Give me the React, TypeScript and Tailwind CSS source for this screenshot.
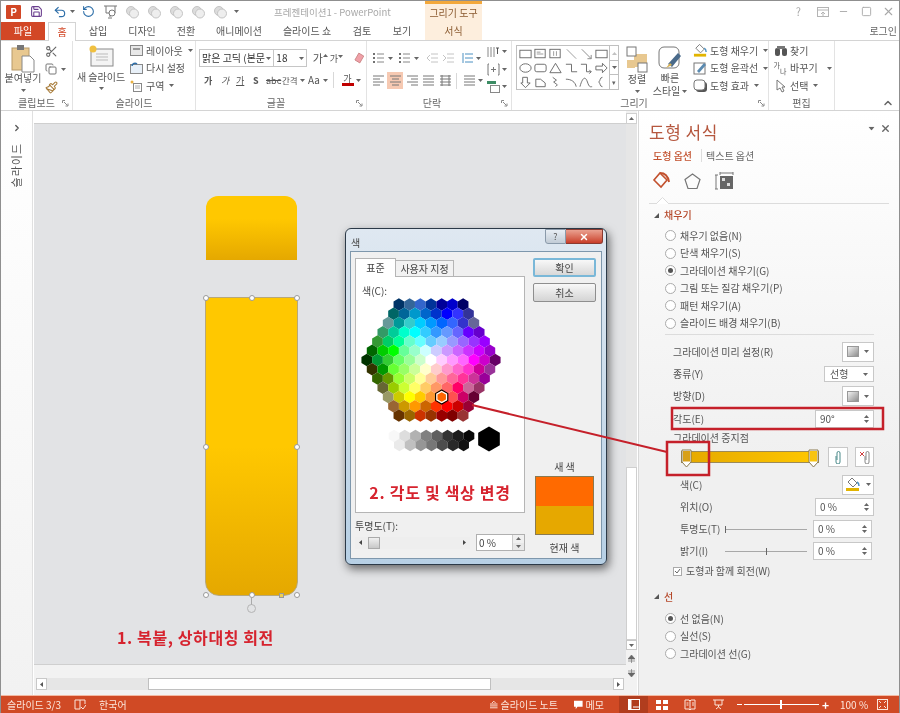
import React from "react";
import { Save, Undo2, RotateCcw, Scissors, Copy, Paintbrush, ChevronUp, X, Minus, Square, ChevronRight } from "lucide-react";

const Caret = ({ className = "" }: { className?: string }) => (
  <svg width="5" height="3" viewBox="0 0 5 3" className={`shrink-0 ${className}`}><path d="M0 0h5L2.5 3z" fill="#666" /></svg>
);

const Launcher = () => (
  <svg width="7" height="7" viewBox="0 0 7 7" className="shrink-0"><path d="M0.5 3V0.5H3M2 2l3.5 3.5M6 3.5V6H3.5" fill="none" stroke="#8a8a8a" strokeWidth="1" /></svg>
);

const Faded = () => (
  <svg width="15" height="14" viewBox="0 0 15 14"><circle cx="6" cy="6" r="4.5" fill="#dcdcdc" stroke="#c4c4c4" /><circle cx="9" cy="8.5" r="4.5" fill="#eeeeee" stroke="#c4c4c4" /></svg>
);

const WHEEL: string[][] = [
  ["003366", "336699", "3366CC", "003399", "000099", "0000CC", "000066"],
  ["006666", "006699", "0099CC", "0066CC", "0033CC", "0000FF", "3333FF", "333399"],
  ["669999", "009999", "33CCCC", "00CCFF", "0099FF", "0066FF", "3366FF", "3333CC", "666699"],
  ["339966", "00CC99", "00FFCC", "00FFFF", "33CCFF", "3399FF", "6699FF", "6666FF", "6600FF", "6600CC"],
  ["339933", "00CC66", "00FF99", "66FFCC", "66FFFF", "66CCFF", "99CCFF", "9999FF", "9966FF", "9933FF", "9900FF"],
  ["006600", "00CC00", "00FF00", "66FF99", "99FFCC", "CCFFFF", "CCCCFF", "CC99FF", "CC66FF", "CC33FF", "CC00FF", "9900CC"],
  ["003300", "009933", "33CC33", "66FF66", "99FF99", "CCFFCC", "FFFFFF", "FFCCFF", "FF99FF", "FF66FF", "FF00FF", "CC00CC", "660066"],
  ["333300", "009900", "66FF33", "99FF66", "CCFF99", "FFFFCC", "FFCCCC", "FF99CC", "FF66CC", "FF33CC", "CC0099", "993399"],
  ["336600", "669900", "99FF33", "CCFF66", "FFFF99", "FFCC99", "FF9999", "FF6699", "FF3399", "CC3399", "990099"],
  ["666633", "99CC00", "CCFF33", "FFFF66", "FFCC66", "FF9966", "FF6666", "FF0066", "CC6699", "993366"],
  ["999966", "CCCC00", "FFFF00", "FFCC00", "FF9933", "FF6600", "FF5050", "CC0066", "660033"],
  ["996633", "CC9900", "FF9900", "CC6600", "FF3300", "FF0000", "CC0000", "990033"],
  ["663300", "996600", "CC3300", "993300", "990000", "800000", "993333"],
];
const GRAY1 = ["F8F8F8", "DDDDDD", "B2B2B2", "808080", "5F5F5F", "333333", "1C1C1C", "080808"];
const GRAY2 = ["EAEAEA", "C0C0C0", "969696", "777777", "4D4D4D", "292929", "111111"];

const hexPts = (cx: number, cy: number, r: number) => {
  const w = (r * Math.sqrt(3)) / 2;
  return [[cx, cy - r], [cx + w, cy - r / 2], [cx + w, cy + r / 2], [cx, cy + r], [cx - w, cy + r / 2], [cx - w, cy - r / 2]]
    .map((p) => p.map((v) => v.toFixed(2)).join(",")).join(" ");
};

const ColorWheel = () => {
  const ox = 356, oy = 296, step = 10.7, R = 6.2, rowH = 9.25;
  const hexes: React.ReactNode[] = [];
  WHEEL.forEach((row, i) => {
    const y = 359 + (i - 6) * rowH - oy;
    row.forEach((c, j) => {
      const x = 431 + (j - (row.length - 1) / 2) * step - ox;
      hexes.push(<polygon key={`${i}-${j}`} points={hexPts(x, y, R)} fill={`#${c}`} />);
    });
  });
  GRAY1.forEach((c, j) => hexes.push(<polygon key={`a${j}`} points={hexPts(431.5 + (j - 3.5) * step - ox, 435 - oy, R)} fill={`#${c}`} />));
  GRAY2.forEach((c, j) => hexes.push(<polygon key={`b${j}`} points={hexPts(431.5 + (j - 3) * step - ox, 444 - oy, R)} fill={`#${c}`} />));
  return (
    <svg width="165" height="165" viewBox="0 0 165 165" className="block">
      {hexes}
      <polygon points={hexPts(489 - ox, 438 - oy, 12.5)} fill="#000" />
      <polygon points={hexPts(441.7 - ox, 396 - oy, 7)} fill="#FF6600" stroke="#000" strokeWidth="1.2" />
      <polygon points={hexPts(441.7 - ox, 396 - oy, 5.6)} fill="none" stroke="#fff" strokeWidth="1.2" />
    </svg>
  );
};

const Shape = ({ i }: { i: number }) => {
  const s = { fill: "none", stroke: "#6a6a6a", strokeWidth: 1 };
  const all: React.ReactNode[] = [
    <rect x="2" y="3" width="12" height="8" {...s} />,
    <g><rect x="2" y="2" width="11" height="9" {...s} /><path d="M4 5h4M4 7h7" stroke="#999" /></g>,
    <g><rect x="2" y="2" width="11" height="9" {...s} /><path d="M6 4v5M9 4v5" stroke="#999" /></g>,
    <path d="M3 2l10 10" {...s} stroke="#999" />,
    <path d="M3 2l10 10M13 8v4h-4" {...s} stroke="#888" />,
    <rect x="2" y="3" width="12" height="8" {...s} />,
    <ellipse cx="8" cy="7" rx="6" ry="4.5" {...s} />,
    <rect x="2" y="3" width="12" height="8" rx="2" {...s} />,
    <path d="M8 2l6 10H2z" {...s} />,
    <path d="M2 3h6v8h6" {...s} />,
    <path d="M2 3h6v8h5M11 9l2 2-2 2" {...s} />,
    <path d="M2 5h7V2l5 5-5 5V9H2z" {...s} />,
    <path d="M5 2h5v6h3l-5 5-5-5h2z" {...s} />,
    <path d="M3 4h5l5 4v4H3z" {...s} />,
    <path d="M5 2l4 3-3 2 4 3-2 2" {...s} />,
    <path d="M2 4c6 0 10 3 11 8" {...s} />,
    <path d="M1 12C4 1 7 1 9 7s3 5 5 5" {...s} />,
    <path d="M9 2C6 2 7 6 5 7c2 1 1 5 4 5" {...s} />,
  ];
  return <svg width="17" height="14" viewBox="0 0 16 14">{all[i]}</svg>;
};

const Radio = ({ on = false }: { on?: boolean }) => (
  <span className="w-[11px] h-[11px] rounded-full border border-[#ababab] bg-white flex items-center justify-center shrink-0">
    {on && <span className="w-[5px] h-[5px] rounded-full bg-[#555]" />}
  </span>
);

const RadioRow = ({ label, on }: { label: string; on?: boolean }) => (
  <div className="h-[17.5px] flex items-center gap-[4px] pl-[26px] text-[10px] text-[#555] leading-none">
    <Radio on={on} />
    <span>{label}</span>
  </div>
);

const Spin = () => (
  <span className="flex flex-col gap-[2px]">
    <svg width="5" height="3" viewBox="0 0 5 3"><path d="M0 3h5L2.5 0z" fill="#666" /></svg>
    <svg width="5" height="3" viewBox="0 0 5 3"><path d="M0 0h5L2.5 3z" fill="#666" /></svg>
  </span>
);

const SpinInput = ({ value }: { value: string }) => (
  <div className="w-[59px] h-[18px] border border-[#c8c8c8] bg-white flex items-center justify-between pl-[4px] pr-[4px] text-[10px] text-[#555] leading-none">
    <span>{value}</span>
    <Spin />
  </div>
);

const Swatch = () => (
  <span className="w-[12px] h-[11px] border border-[#999] bg-gradient-to-br from-[#f2f2f2] to-[#8f8f8f]" />
);

const DropBtn = ({ children }: { children: React.ReactNode }) => (
  <div className="w-[32px] h-[20px] border border-[#c8c8c8] bg-white flex items-center justify-center gap-[5px]">
    {children}
    <Caret />
  </div>
);

const PaneRow = ({ label, h, indent, children }: { label: string; h: string; indent?: boolean; children: React.ReactNode }) => (
  <div className={`flex items-center justify-between text-[10px] text-[#555] leading-none ${h} ${indent ? "pl-[7px]" : ""}`}>
    <span>{label}</span>
    {children}
  </div>
);

const PaneSlider = ({ pos }: { pos: string }) => (
  <div className="w-[82px] h-[1px] bg-[#a8a8a8] relative">
    <span className={`absolute top-[-3px] w-[1px] h-[7px] bg-[#666] ${pos}`} />
  </div>
);

const BucketIcon = ({ bar = "#e2b400" }: { bar?: string }) => (
  <svg width="16" height="15" viewBox="0 0 16 15">
    <path d="M7 1l5 5-4 4-5-5z" fill="#fff" stroke="#777" />
    <path d="M12 5c2 1 2 3 2 4" stroke="#4a90c2" strokeWidth="1.5" fill="none" />
    <rect x="1" y="11" width="13" height="3" fill={bar} />
  </svg>
);

const SmallRow = ({ icon, text, caret = true, caretCls = "ml-[3px]" }: { icon: React.ReactNode; text: string; caret?: boolean; caretCls?: string }) => (
  <div className="h-[17.5px] flex items-center gap-[2px] text-[10px] text-[#555] leading-none whitespace-nowrap">
    <span className="w-[15px] h-[15px] flex items-center justify-center shrink-0">{icon}</span>
    <span>{text}</span>
    {caret && <Caret className={caretCls} />}
  </div>
);

const GroupLabel = ({ text, launcher = true, pad = "" }: { text: string; launcher?: boolean; pad?: string }) => (
  <div className={`h-[14px] flex items-center justify-center relative text-[10px] text-[#666] leading-none ${pad}`}>
    <span>{text}</span>
    {launcher && <span className="absolute right-[3px] top-[4px]"><Launcher /></span>}
  </div>
);

const Lines = ({ kind }: { kind: "l" | "c" | "r" | "j" | "d" }) => {
  const d = {
    l: "M0 2h11M0 5h7M0 8h11M0 11h7",
    c: "M0 2h11M2 5h7M0 8h11M2 11h7",
    r: "M0 2h11M4 5h7M0 8h11M4 11h7",
    j: "M0 2h11M0 5h11M0 8h11M0 11h11",
    d: "M0 2h11M0 5h11M0 8h11M0 11h11M2 1v11M9 1v11",
  }[kind];
  return <svg width="11" height="13" viewBox="0 0 11 13" className="shrink-0"><path d={d} stroke="#777" fill="none" /></svg>;
};

const Bullets = () => (
  <svg width="11" height="13" viewBox="0 0 11 13" className="shrink-0"><path d="M0 2h2M0 6h2M0 10h2" stroke="#444" strokeWidth="1.5" /><path d="M4 2h7M4 6h7M4 10h7" stroke="#888" /></svg>
);

const FontBtn = ({ children, className = "" }: { children: React.ReactNode; className?: string }) => (
  <span className={`text-[9px] text-[#555] leading-none shrink-0 ${className}`}>{children}</span>
);

const Handle = ({ className }: { className: string }) => (
  <span className={`absolute w-[6px] h-[6px] rounded-full bg-white border border-[#9a9a9a] ${className}`} />
);

const Stop = ({ className, fill }: { className: string; fill: string }) => (
  <svg width="11" height="19" viewBox="0 0 11 19" className={className}>
    <path d="M1 1h9v12l-4.5 5L1 13z" fill="#fff" stroke="#8a7a50" />
    <path d="M2 2h7v10.5H2z" fill={fill} />
  </svg>
);

export default function App() {
  return (
    <div className="relative w-[900px] h-[713px] overflow-hidden bg-white border-x border-t border-[#8f8f8f] flex flex-col blur-[0.3px] [font-family:'Noto_Sans_CJK_KR','Noto_Sans',sans-serif]">
      {/* Title + tabs */}
      <div className="flex h-[40px] shrink-0 border-b border-[#d4d4d4]">
        <div className="w-[424px] flex flex-col">
          <div className="h-[21px] flex items-center relative">
            <span className="ml-[5px] w-[15px] h-[14px] bg-[#d24726] text-white text-[10px] font-bold flex items-center justify-center leading-none rounded-[1px]">P</span>
            <Save size={13} className="ml-[9px] text-[#6b3f8f]" />
            <Undo2 size={14} className="ml-[10px] text-[#2d6ea8]" />
            <Caret className="ml-[3px]" />
            <RotateCcw size={13} className="ml-[7px] text-[#2d6ea8]" />
            <svg width="15" height="14" viewBox="0 0 15 14" className="ml-[8px]"><path d="M1 1h13M3 1v7h9V1M7 8v4M5 13h4" fill="none" stroke="#777" /><circle cx="9" cy="8" r="3" fill="#fff" stroke="#777" /></svg>
            <span className="ml-[7px] flex items-center gap-[7px]"><Faded /><Faded /><Faded /><Faded /><Faded /></span>
            <Caret className="ml-[6px]" />
            <span className="absolute left-[273px] top-[3px] text-[9.5px] text-[#a8a8a8] leading-[16px] whitespace-nowrap">프레젠테이션1 - PowerPoint</span>
          </div>
          <div className="h-[18px] flex items-end text-[10px] text-[#555] leading-none">
            <span className="w-[44px] h-[18px] bg-[#d24726] text-white flex items-center justify-center">파일</span>
            <span className="ml-[3px] w-[28px] h-[19px] bg-white border-x border-t border-[#d4d4d4] text-[#d24726] flex items-center justify-center relative top-[1px]">홈</span>
            <span className="w-[44px] h-[18px] flex items-center justify-center">삽입</span>
            <span className="w-[44px] h-[18px] flex items-center justify-center">디자인</span>
            <span className="w-[44px] h-[18px] flex items-center justify-center">전환</span>
            <span className="w-[62px] h-[18px] flex items-center justify-center">애니메이션</span>
            <span className="w-[74px] h-[18px] flex items-center justify-center">슬라이드 쇼</span>
            <span className="w-[36px] h-[18px] flex items-center justify-center">검토</span>
            <span className="w-[44px] h-[18px] flex items-center justify-center">보기</span>
          </div>
        </div>
        <div className="w-[57px] flex flex-col bg-[#fdeedd] border-t-[3px] border-[#f3a83b] text-[10px] text-[#8a5a30] leading-none items-center">
          <span className="h-[18px] flex items-center whitespace-nowrap">그리기 도구</span>
          <span className="h-[18px] flex items-center">서식</span>
        </div>
        <div className="flex-1 flex flex-col">
          <div className="h-[21px] flex items-center justify-end pr-[4px] text-[#a8a8a8]">
            <span className="text-[11px] leading-none">?</span>
            <svg width="12" height="10" viewBox="0 0 12 10" className="ml-[16px]"><rect x="0.5" y="0.5" width="11" height="9" fill="none" stroke="#b4b4b4" /><path d="M0 3h12M6 9V5M4 7l2-2 2 2" fill="none" stroke="#b4b4b4" /></svg>
            <Minus size={11} className="ml-[9px]" />
            <Square size={11} className="ml-[12px]" />
            <X size={13} className="ml-[10px]" />
          </div>
          <div className="h-[18px] flex items-center justify-end pr-[2px] text-[10px] text-[#666] leading-none">로그인</div>
        </div>
      </div>

      {/* Ribbon */}
      <div className="flex h-[70px] shrink-0 border-b border-[#d4d4d4]">
        {/* clipboard */}
        <div className="w-[72px] flex flex-col border-r border-[#e3e3e3]">
          <div className="flex-1 flex">
            <div className="w-[44px] flex flex-col items-center pt-[3px]">
              <svg width="24" height="29" viewBox="0 0 24 29"><rect x="1" y="4" width="17" height="22" fill="#e8c890" stroke="#b89a68" /><rect x="6" y="1" width="7" height="5" fill="#777" /><path d="M11 12h8l4 4v12H11z" fill="#fff" stroke="#888" /></svg>
              <span className="text-[10px] text-[#555] leading-none whitespace-nowrap">붙여넣기</span>
              <Caret className="mt-[6px]" />
            </div>
            <div className="flex flex-col items-start pt-[1px]">
              <span className="h-[18px] flex items-center"><Scissors size={13} className="text-[#666]" /></span>
              <span className="h-[18px] flex items-center gap-[4px]"><Copy size={12} className="text-[#777]" /><Caret /></span>
              <span className="h-[18px] flex items-center"><Paintbrush size={13} className="text-[#a87c3a]" /></span>
            </div>
          </div>
          <GroupLabel text="클립보드" />
        </div>
        {/* slides */}
        <div className="w-[123px] flex flex-col border-r border-[#e3e3e3]">
          <div className="flex-1 flex">
            <div className="w-[56px] flex flex-col items-center pt-[4px]">
              <svg width="26" height="22" viewBox="0 0 26 22"><rect x="3" y="4" width="22" height="17" fill="#f4f4f4" stroke="#8a8a8a" /><path d="M8 9h12M8 12h12M8 15h12" stroke="#bbb" /><circle cx="5" cy="4" r="3.5" fill="#f0c040" /></svg>
              <span className="mt-[5px] text-[10px] text-[#555] leading-none whitespace-nowrap">새 슬라이드</span>
              <Caret className="mt-[5px]" />
            </div>
            <div className="flex flex-col pt-[1px]">
              <SmallRow icon={<svg width="13" height="11" viewBox="0 0 13 11"><rect x="0.5" y="0.5" width="12" height="10" fill="#e8e8e8" stroke="#888" /><rect x="3" y="3" width="7" height="2" fill="#999" /></svg>} text="레이아웃" />
              <SmallRow icon={<svg width="13" height="12" viewBox="0 0 13 12"><rect x="0.5" y="2.5" width="12" height="9" fill="#e8f0f8" stroke="#888" /><path d="M2 4a3 3 0 015-2" stroke="#2d6ea8" strokeWidth="1.5" fill="none" /></svg>} text="다시 설정" caret={false} />
              <SmallRow icon={<svg width="13" height="12" viewBox="0 0 13 12"><rect x="3.5" y="3.5" width="8" height="8" fill="#fff" stroke="#888" /><path d="M5 6h5M5 8h5" stroke="#aaa" /><circle cx="2" cy="2" r="1.5" fill="#e8b040" /></svg>} text="구역" />
            </div>
          </div>
          <GroupLabel text="슬라이드" launcher={false} />
        </div>
        {/* font */}
        <div className="w-[171px] flex flex-col border-r border-[#e3e3e3]">
          <div className="flex-1 flex flex-col pl-[3px] pt-[8px]">
            <div className="flex items-center h-[18px]">
              <div className="w-[77px] h-[18px] border border-[#c6c6c6] flex items-center justify-between px-[2px] text-[10px] text-[#333] leading-none whitespace-nowrap overflow-hidden">
                <span>맑은 고딕 (본문</span><Caret />
              </div>
              <div className="w-[33px] h-[18px] border-y border-r border-[#c6c6c6] flex items-center justify-between px-[2px] text-[10px] text-[#333] leading-none">
                <span>18</span><Caret />
              </div>
              <span className="ml-[6px] w-[15px] flex items-start text-[11px] text-[#555] leading-none">가<Caret className="rotate-180 mt-[1px]" /></span>
              <span className="ml-[2px] w-[14px] flex items-start text-[9px] text-[#555] leading-none">가<Caret className="mt-[1px]" /></span>
              <svg width="14" height="14" viewBox="0 0 14 14" className="ml-[9px]"><path d="M7 2l5 3-4 7-5-3z" fill="#f0a0a8" stroke="#c88" /></svg>
            </div>
            <div className="flex items-center h-[18px] mt-[4px] pl-[5px]">
              <FontBtn className="w-[17px] font-bold">가</FontBtn>
              <FontBtn className="w-[15px] italic">가</FontBtn>
              <FontBtn className="w-[17px] underline">가</FontBtn>
              <FontBtn className="w-[13px] font-bold">S</FontBtn>
              <FontBtn className="w-[16px] line-through text-[8px]">abc</FontBtn>
              <span className="flex items-center gap-[2px] w-[24px] shrink-0 text-[8.5px] text-[#555] leading-none whitespace-nowrap">간격<Caret /></span>
              <span className="flex items-center gap-[3px] w-[25px] shrink-0 text-[10px] text-[#555] leading-none ml-[2px]">Aa<Caret /></span>
              <span className="w-[1px] h-[16px] bg-[#d8d8d8] shrink-0" />
              <span className="ml-[8px] flex flex-col items-center w-[11px] shrink-0">
                <span className="text-[9px] text-[#555] leading-none">가</span>
                <span className="w-[12px] h-[3px] bg-[#c00000]" />
              </span>
              <Caret className="ml-[3px]" />
            </div>
          </div>
          <GroupLabel text="글꼴" pad="pr-[10px]" />
        </div>
        {/* paragraph */}
        <div className="w-[145px] flex flex-col border-r border-[#e3e3e3]">
          <div className="flex-1 flex">
            <div className="w-[120px] shrink-0 flex flex-col pt-[9px] pl-[6px]">
              <div className="flex items-center h-[16px]">
                <Bullets /><Caret className="ml-[4px]" />
                <span className="ml-[6px] flex"><Bullets /></span><Caret className="ml-[4px]" />
                <svg width="11" height="12" viewBox="0 0 11 12" className="ml-[8px] shrink-0"><path d="M4 2h7M4 6h7M4 10h7M3 3L0 6l3 3" fill="none" stroke="#c4c4c4" /></svg>
                <svg width="11" height="12" viewBox="0 0 11 12" className="ml-[5px] shrink-0"><path d="M4 2h7M4 6h7M4 10h7M0 3l3 3-3 3" fill="none" stroke="#c4c4c4" /></svg>
                <svg width="11" height="12" viewBox="0 0 11 12" className="ml-[8px] shrink-0"><path d="M1 1v10M3 2h8M3 6h8M3 10h8" fill="none" stroke="#4a90c2" /></svg>
                <Caret className="ml-[3px]" />
              </div>
              <div className="flex items-center h-[17px] mt-[6px]">
                <Lines kind="l" />
                <span className="ml-[3px] w-[16px] h-[17px] flex items-center justify-center bg-[#f6c9b2]"><Lines kind="c" /></span>
                <span className="ml-[4px] flex"><Lines kind="r" /></span>
                <span className="ml-[5px] flex"><Lines kind="j" /></span>
                <span className="ml-[6px] flex"><Lines kind="d" /></span>
                <span className="ml-[5px] w-[1px] h-[16px] bg-[#d8d8d8]" />
                <span className="ml-[7px] flex"><Lines kind="j" /></span>
                <Caret className="ml-[3px]" />
              </div>
            </div>
            <div className="flex flex-col pt-[2px]">
              <span className="h-[17.5px] flex items-center gap-[2px]"><svg width="13" height="13" viewBox="0 0 13 13"><path d="M1 12V2M4 12V2M7 12V2" stroke="#888" /><path d="M9 3h3M10.5 3v6" stroke="#555" /></svg><Caret /></span>
              <span className="h-[17.5px] flex items-center gap-[2px]"><svg width="13" height="13" viewBox="0 0 13 13"><path d="M2 1H1v11h1M11 1h1v11h-1M4 6.5h5M6.5 4v5" fill="none" stroke="#777" /></svg><Caret /></span>
              <span className="h-[17.5px] flex items-center gap-[2px]"><svg width="13" height="13" viewBox="0 0 13 13"><path d="M0 1h9v3H0z" fill="#3c8c64" /><rect x="3.5" y="5.5" width="9" height="7" fill="#fff" stroke="#888" /></svg><Caret /></span>
            </div>
          </div>
          <GroupLabel text="단락" pad="pr-[14px]" />
        </div>
        {/* drawing */}
        <div className="w-[257px] flex flex-col border-r border-[#e3e3e3]">
          <div className="flex-1 flex">
            <div className="ml-[4px] mt-[4px] w-[103px] h-[45px] border border-[#c0c0c0] flex shrink-0">
              <div className="w-[92px] grid grid-cols-6 pl-[1px] pt-[1px] content-start">
                {Array.from({ length: 18 }, (_, i) => <span key={i} className="w-[15px] h-[14px] flex items-center justify-center overflow-hidden"><Shape i={i} /></span>)}
              </div>
              <div className="flex-1 border-l border-[#c0c0c0] flex flex-col">
                <span className="h-[15px] flex items-center justify-center border-b border-[#c0c0c0]"><Caret className="rotate-180 opacity-40" /></span>
                <span className="h-[14px] flex items-center justify-center border-b border-[#c0c0c0]"><Caret /></span>
                <span className="flex-1 flex items-center justify-center text-[7px] text-[#666] leading-none">▾</span>
              </div>
            </div>
            <div className="w-[36px] flex flex-col items-center pt-[5px] shrink-0">
              <svg width="22" height="27" viewBox="0 0 22 27"><rect x="8" y="8" width="13" height="13" fill="#e8c890" /><rect x="1" y="1" width="9" height="9" fill="#fff" stroke="#777" /><rect x="1" y="14" width="8" height="8" fill="#e8c890" /><rect x="12" y="17" width="9" height="9" fill="#fff" stroke="#777" /></svg>
              <span className="mt-[1px] text-[10px] text-[#555] leading-none whitespace-nowrap">정렬</span>
              <Caret className="mt-[6px]" />
            </div>
            <div className="w-[30px] flex flex-col items-center pt-[5px] shrink-0">
              <svg width="25" height="24" viewBox="0 0 25 24"><rect x="1" y="1" width="20" height="21" rx="5" fill="#fff" stroke="#777" /><path d="M10 18l10-11 3 3-9 11z" fill="#4a6a8a" /><path d="M8 22l4-5 2 2z" fill="#d8b050" /></svg>
              <span className="mt-[3px] text-[10px] text-[#555] leading-none whitespace-nowrap">빠른</span>
              <span className="mt-[3px] text-[10px] text-[#555] leading-none whitespace-nowrap flex items-center gap-[2px]">스타일<Caret /></span>
            </div>
            <div className="flex flex-col pt-[1px] pl-[8px]">
              <SmallRow icon={<BucketIcon />} text="도형 채우기" />
              <SmallRow icon={<svg width="15" height="15" viewBox="0 0 15 15"><rect x="1" y="2" width="11" height="11" fill="#fff" stroke="#777" /><path d="M4 10l7-8 2 2-7 8z" fill="#5a8ab0" /></svg>} text="도형 윤곽선" />
              <SmallRow icon={<svg width="15" height="14" viewBox="0 0 15 14"><rect x="3" y="3" width="11" height="10" rx="3" fill="#555" /><rect x="1" y="1" width="11" height="10" rx="3" fill="#fff" stroke="#777" /></svg>} text="도형 효과" />
            </div>
          </div>
          <GroupLabel text="그리기" pad="pr-[12px]" />
        </div>
        {/* edit */}
        <div className="w-[66px] flex flex-col border-r border-[#e3e3e3]">
          <div className="flex-1 flex flex-col pt-[1px] pl-[4px]">
            <SmallRow icon={<svg width="14" height="12" viewBox="0 0 14 12"><rect x="1" y="3" width="5" height="8" rx="2" fill="#555" /><rect x="8" y="3" width="5" height="8" rx="2" fill="#555" /><rect x="3" y="1" width="8" height="3" fill="#777" /></svg>} text="찾기" caret={false} />
            <SmallRow icon={<span className="flex items-start w-[14px] h-[13px] text-[7px] leading-[7px] text-[#555]"><span>가</span><span className="mt-[6px]">나</span></span>} text="바꾸기" caretCls="ml-[7px]" />
            <SmallRow icon={<svg width="12" height="14" viewBox="0 0 12 14"><path d="M2 1v10l3-2 2 4 2-1-2-4h3z" fill="#fff" stroke="#777" /></svg>} text="선택" />
          </div>
          <GroupLabel text="편집" launcher={false} />
        </div>
        <div className="flex-1 flex flex-col justify-end items-end pr-[5px] pb-[1px]">
          <ChevronUp size={12} className="text-[#666]" strokeWidth={3} />
        </div>
      </div>

      {/* Body */}
      <div className="flex flex-1 min-h-0">
        {/* rail */}
        <div className="w-[32px] shrink-0 flex flex-col items-center pt-[12px] border-r border-[#e0e0e0] bg-gradient-to-b from-white to-[#f2f2f2]">
          <ChevronRight size={10} strokeWidth={3} className="text-[#555]" />
          <span className="mt-[10px] text-[11px] text-[#555] leading-none tracking-[1px] [writing-mode:vertical-rl] [text-orientation:sideways] rotate-180">슬라이드</span>
        </div>
        {/* editor */}
        <div className="w-[593px] shrink-0 flex flex-col pl-[1px]">
          <div className="h-[13px] border-b border-[#cfcfcf] bg-white shrink-0" />
          <div className="flex-1 min-h-0 bg-[#e2e3e5] border-b border-[#cfcfcf] flex flex-col pl-[172px] pt-[72px]">
            <div className="w-[91px] h-[64px] rounded-t-[12px] bg-gradient-to-b from-[#ffc800] from-[35%] to-[#e5a800]" />
            <div className="relative w-[93px] h-[299px] mt-[37px] -ml-[1px] border border-[#b8a878] rounded-b-[14px] bg-gradient-to-b from-[#ffc800] from-[50%] to-[#e5a800] overflow-visible">
              <Handle className="-left-[3px] -top-[3px]" />
              <Handle className="left-[43px] -top-[3px]" />
              <Handle className="-right-[3px] -top-[3px]" />
              <Handle className="-left-[3px] top-[146px]" />
              <Handle className="-right-[3px] top-[146px]" />
              <Handle className="-left-[3px] -bottom-[3px]" />
              <Handle className="left-[43px] -bottom-[3px]" />
              <Handle className="-right-[3px] -bottom-[3px]" />
              <span className="absolute left-[73px] -bottom-[3px] w-[5px] h-[5px] bg-[#f0d050] border border-[#999]" />
              <span className="absolute left-[45px] -bottom-[10px] w-[1px] h-[8px] bg-[#aaa]" />
              <span className="absolute left-[41px] -bottom-[18px] w-[9px] h-[9px] rounded-full border border-[#b4b4b4]" />
            </div>
            <div className="mt-[31px] -ml-[89px] text-[16px] font-bold tracking-[0.6px] text-[#d6232e] leading-[20px] whitespace-nowrap">1. 복붙, 상하대칭 회전</div>
          </div>
          <div className="h-[30px] shrink-0 bg-[#f2f2f2] flex flex-col pt-[13px]">
            <div className="h-[12px] flex items-stretch ml-[2px] mr-[2px] bg-[#e6e6e6]">
              <span className="w-[11px] bg-white border border-[#c8c8c8] flex items-center justify-center"><svg width="3" height="5" viewBox="0 0 3 5"><path d="M3 0v5L0 2.5z" fill="#555" /></svg></span>
              <span className="w-[101px]" />
              <span className="w-[343px] bg-white border border-[#c0c0c0]" />
              <span className="flex-1" />
              <span className="w-[11px] bg-white border border-[#c8c8c8] flex items-center justify-center"><svg width="3" height="5" viewBox="0 0 3 5"><path d="M0 0v5L3 2.5z" fill="#555" /></svg></span>
            </div>
          </div>
        </div>
        {/* v scrollbar */}
        <div className="w-[11px] shrink-0 flex flex-col bg-[#f2f2f2]">
          <span className="mt-[2px] h-[11px] bg-white border border-[#d0d0d0] flex items-center justify-center"><Caret className="rotate-180" /></span>
          <span className="h-[343px] bg-[#e6e6e6]" />
          <span className="h-[173px] bg-white border border-[#cfcfcf]" />
          <span className="h-[10px] bg-white border border-[#c8c8c8] flex items-center justify-center"><Caret /></span>
          <span className="mt-[2px] h-[14px] flex items-center justify-center"><svg width="7" height="8" viewBox="0 0 7 8"><path d="M0 4L3.5 0 7 4zM0 6h7M3.5 4v4" fill="#666" stroke="#666" strokeWidth="0.6" /></svg></span>
          <span className="h-[14px] flex items-center justify-center"><svg width="7" height="8" viewBox="0 0 7 8"><path d="M0 4L3.5 8 7 4zM0 2h7M3.5 0v4" fill="#666" stroke="#666" strokeWidth="0.6" /></svg></span>
        </div>
        <div className="w-[1px] shrink-0" />
        {/* pane */}
        <div className="flex-1 border-l border-[#d8d8d8] bg-gradient-to-b from-white to-[#f0f0f0] to-[60%] flex flex-col">
          <div className="h-[33px] pt-[10px] flex items-start justify-between pl-[10px] pr-[8px] shrink-0">
            <span className="text-[17px] text-[#b5573e] leading-[22px] tracking-[0.5px]">도형 서식</span>
            <span className="flex items-center gap-[6px] h-[14px]"><Caret className="scale-125" /><X size={11} strokeWidth={3} className="text-[#666]" /></span>
          </div>
          <div className="h-[23px] flex items-center pl-[14px] text-[10px] leading-none shrink-0">
            <span className="text-[#c2512e] font-medium w-[48px]">도형 옵션</span>
            <span className="w-[1px] h-[13px] bg-[#ddd]" />
            <span className="ml-[4px] text-[#666]">텍스트 옵션</span>
          </div>
          <div className="h-[24px] flex items-center pl-[13px] gap-[11px] shrink-0 mt-[2px]">
            <svg width="20" height="20" viewBox="0 0 20 20"><path d="M8 2l7 7-6 7-7-7z" fill="none" stroke="#c2512e" strokeWidth="1.6" /><path d="M8 2c5 0 8 3 9 9" fill="none" stroke="#c2512e" strokeWidth="2" /></svg>
            <svg width="19" height="19" viewBox="0 0 19 19"><path d="M9.5 2l7.5 5.5-3 9H5l-3-9z" fill="none" stroke="#777" strokeWidth="1.2" /></svg>
            <svg width="20" height="19" viewBox="0 0 20 19" className="ml-[2px]"><path d="M1 3v14M0 3h3M0 17h3M5 1h13M5 0v3M18 0v3" fill="none" stroke="#777" /><rect x="5" y="4" width="13" height="13" fill="#666" /><rect x="7" y="6" width="3" height="3" fill="#ddd" /><rect x="12" y="11" width="3" height="3" fill="#ddd" /></svg>
          </div>
          <div className="relative h-[1px] bg-[#dcdcdc] ml-[10px] mr-[10px] shrink-0 mt-[10px]">
            <svg width="13" height="7" viewBox="0 0 13 7" className="absolute left-[7px] -top-[6px]"><path d="M0 7l6.5-6.5L13 7" fill="#fff" stroke="#dcdcdc" /></svg>
          </div>
          <div className="h-[22px] flex items-center gap-[5px] pl-[15px] text-[10px] text-[#b5482a] font-medium leading-none shrink-0">
            <svg width="5" height="5" viewBox="0 0 5 5"><path d="M5 0v5H0z" fill="#555" /></svg>
            <span>채우기</span>
          </div>
          <div className="flex flex-col shrink-0 mt-[1px]">
            <RadioRow label="채우기 없음(N)" />
            <RadioRow label="단색 채우기(S)" />
            <RadioRow label="그라데이션 채우기(G)" on />
            <RadioRow label="그림 또는 질감 채우기(P)" />
            <RadioRow label="패턴 채우기(A)" />
            <RadioRow label="슬라이드 배경 채우기(B)" />
          </div>
          <div className="h-[1px] bg-[#dcdcdc] ml-[26px] mr-[25px] shrink-0 mt-[2px]" />
          <div className="pl-[34px] pr-[25px] flex flex-col shrink-0 mt-[5px]">
            <PaneRow label="그라데이션 미리 설정(R)" h="h-[23px]"><DropBtn><Swatch /></DropBtn></PaneRow>
            <PaneRow label="종류(Y)" h="h-[22px]">
              <div className="w-[50px] h-[16px] border border-[#c8c8c8] bg-white flex items-center justify-between px-[5px]"><span>선형</span><Caret /></div>
            </PaneRow>
            <PaneRow label="방향(D)" h="h-[22px]"><DropBtn><Swatch /></DropBtn></PaneRow>
            <PaneRow label="각도(E)" h="h-[23px]"><SpinInput value="90°" /></PaneRow>
            <div className="h-[15px] flex items-center text-[10px] text-[#555] leading-none">그라데이션 중지점</div>
            <div className="h-[24px] flex items-center justify-between pl-[8px]">
              <div className="relative w-[138px] h-[12px] border border-[#9c8a58] bg-gradient-to-r from-[#e5a800] to-[#ffc800]">
                <Stop className="absolute -left-[1px] -top-[3px]" fill="#d8a018" />
                <Stop className="absolute -right-[1px] -top-[3px]" fill="#f8c410" />
              </div>
              <span className="ml-[8px] w-[20px] h-[20px] border border-[#c8c8c8] bg-white flex items-center justify-center"><svg width="11" height="14" viewBox="0 0 11 14"><path d="M3 6v6a2 2 0 004 0V3a1.5 1.5 0 00-3 0v7" fill="none" stroke="#4a8a8a" /></svg></span>
              <span className="ml-[6px] w-[19px] h-[20px] border border-[#c8c8c8] bg-white flex items-center justify-center"><svg width="12" height="14" viewBox="0 0 12 14"><path d="M6 6v6a2 2 0 004 0V3a1.5 1.5 0 00-3 0v7" fill="none" stroke="#888" /><path d="M1 2l4 4M5 2L1 6" stroke="#d04040" /></svg></span>
            </div>
            <PaneRow label="색(C)" h="h-[23px] mt-[4px]" indent><DropBtn><BucketIcon /></DropBtn></PaneRow>
            <PaneRow label="위치(O)" h="h-[22px]" indent><SpinInput value="0 %" /></PaneRow>
            <div className="h-[22px] flex items-center text-[10px] text-[#555] leading-none pl-[7px]">
              <span className="w-[45px]">투명도(T)</span>
              <PaneSlider pos="left-0" />
              <span className="w-[6px]" />
              <SpinInput value="0 %" />
            </div>
            <div className="h-[22px] flex items-center text-[10px] text-[#555] leading-none pl-[7px]">
              <span className="w-[45px]">밝기(I)</span>
              <PaneSlider pos="left-[41px]" />
              <span className="w-[6px]" />
              <SpinInput value="0 %" />
            </div>
            <div className="h-[18px] flex items-center gap-[4px] text-[10px] text-[#555] leading-none">
              <span className="w-[9px] h-[9px] border border-[#aaa] bg-white flex items-center justify-center"><svg width="7" height="6" viewBox="0 0 7 6"><path d="M1 3l2 2 3-4" fill="none" stroke="#666" /></svg></span>
              <span>도형과 함께 회전(W)</span>
            </div>
          </div>
          <div className="h-[23px] flex items-center gap-[5px] pl-[15px] text-[10px] text-[#b5482a] font-medium leading-none shrink-0 mt-[5px]">
            <svg width="5" height="5" viewBox="0 0 5 5"><path d="M5 0v5H0z" fill="#555" /></svg>
            <span>선</span>
          </div>
          <div className="flex flex-col shrink-0 mt-[2px]">
            <RadioRow label="선 없음(N)" on />
            <RadioRow label="실선(S)" />
            <RadioRow label="그라데이션 선(G)" />
          </div>
        </div>
      </div>

      {/* Status */}
      <div className="h-[18px] shrink-0 bg-[#d04a25] border-t border-[#f3b9a2] flex items-center text-[10px] text-[#fbe6dc] leading-none whitespace-nowrap">
        <div className="w-[489px] shrink-0 flex items-center">
          <span className="ml-[6px] w-[55px]">슬라이드 3/3</span>
          <svg width="12" height="11" viewBox="0 0 12 11" className="ml-[12px]"><path d="M1 1h5v9H1zM6 1h5v4M7 8l2 2 3-4" fill="none" stroke="#fbe6dc" /></svg>
          <span className="ml-[13px]">한국어</span>
        </div>
        <span className="w-[68px] shrink-0 flex items-center gap-[3px]"><svg width="8" height="9" viewBox="0 0 8 9"><path d="M0 4h8M0 6h8M0 8h8M2 3l2-2 2 2" fill="none" stroke="#fbe6dc" /></svg>슬라이드 노트</span>
        <span className="ml-[16px] w-[30px] shrink-0 flex items-center gap-[3px]"><svg width="10" height="10" viewBox="0 0 10 10"><path d="M0 0h10v7H4L2 10V7H0z" fill="#fff" /></svg>메모</span>
        <span className="ml-[15px] w-[29px] h-[17px] shrink-0 bg-[#b13d1e] flex items-center justify-center"><svg width="12" height="11" viewBox="0 0 12 11"><rect x="0.5" y="0.5" width="11" height="10" fill="none" stroke="#fff" /><rect x="0.5" y="0.5" width="3" height="10" fill="#fff" /><path d="M5 8h6" stroke="#fff" /></svg></span>
        <svg width="12" height="10" viewBox="0 0 12 10" className="ml-[8px] shrink-0"><path d="M0 0h5v4H0zM7 0h5v4H7zM0 6h5v4H0zM7 6h5v4H7z" fill="#fff" /></svg>
        <svg width="12" height="11" viewBox="0 0 12 11" className="ml-[16px] shrink-0"><path d="M1 1h4l1 1 1-1h4v9H7l-1 1-1-1H1zM6 2v8M2.5 4h2M2.5 6h2M8 4h2M8 6h2" fill="none" stroke="#fbe6dc" /></svg>
        <svg width="11" height="11" viewBox="0 0 11 11" className="ml-[17px] shrink-0"><path d="M0 1h11M2 1v5h7V1M5.5 6v2M3 10l2.5-2 2.5 2" fill="none" stroke="#fbe6dc" /></svg>
        <span className="ml-[13px] w-[5px] h-[1px] bg-white shrink-0" />
        <span className="ml-[2px] w-[75px] h-[1px] bg-white relative shrink-0"><span className="absolute left-[36px] -top-[4px] w-[2px] h-[9px] bg-white" /></span>
        <span className="text-[12px] font-bold text-white w-[13px] text-center shrink-0">+</span>
        <span className="ml-[8px] w-[26px] shrink-0">100 %</span>
        <svg width="11" height="11" viewBox="0 0 11 11" className="ml-[11px] shrink-0"><rect x="0.5" y="0.5" width="10" height="10" fill="none" stroke="#fbe6dc" /><path d="M2 2l2 2M9 2L7 4M2 9l2-2M9 9L7 7" stroke="#fbe6dc" /></svg>
      </div>

      {/* Colour dialog */}
      <div className="absolute left-[344px] top-[227px] w-[262px] h-[337px] rounded-[6px] border border-[#2c3a48] bg-gradient-to-b from-[#dfe8f1] to-[#b7d0e5] shadow-[2px_4px_10px_rgba(0,0,0,0.55)] flex flex-col text-[10px] text-[#444] leading-none">
        <div className="h-[22px] flex items-start justify-between pl-[5px] pr-[3px] shrink-0">
          <span className="mt-[9px]">색</span>
          <div className="flex h-[15px]">
            <span className="w-[21px] border border-[#8a9aaa] rounded-bl-[3px] bg-gradient-to-b from-[#e8eef4] to-[#c2ccd6] flex items-center justify-center text-[9px] text-[#555]">?</span>
            <span className="w-[37px] border-y border-r border-[#8a3a30] rounded-br-[3px] bg-gradient-to-b from-[#e9a090] to-[#c83c28] flex items-center justify-center"><X size={10} strokeWidth={3.5} className="text-white" /></span>
          </div>
        </div>
        <div className="flex-1 min-h-0 mx-[4px] mb-[5px] bg-[#f0f0f0] border border-[#7e97ac] flex pl-[4px] pt-[6px]">
          <div className="w-[170px] shrink-0 flex flex-col">
            <div className="h-[18px] flex items-end relative z-10">
              <span className="w-[41px] h-[19px] bg-white border-x border-t border-[#b5b5b5] flex items-center justify-center relative top-[1px]">표준</span>
              <span className="w-[58px] h-[16px] bg-[#f2f2f2] border-r border-t border-[#b5b5b5] flex items-center justify-center">사용자 지정</span>
            </div>
            <div className="h-[237px] bg-white border border-[#b5b5b5] flex flex-col">
              <span className="ml-[6px] mt-[9px] text-[10px] h-[11px]">색(C):</span>
              <ColorWheel />
              <div className="mt-[20px] text-center text-[16px] font-bold tracking-[0.7px] text-[#d6232e] leading-[20px]">2. 각도 및 색상 변경</div>
            </div>
            <span className="mt-[8px] h-[12px]">투명도(T):</span>
            <div className="mt-[1px] flex items-center">
              <div className="w-[115px] h-[12px] bg-[#eeeeee] flex items-center justify-between px-[4px] relative">
                <svg width="3" height="5" viewBox="0 0 3 5"><path d="M3 0v5L0 2.5z" fill="#444" /></svg>
                <span className="absolute left-[13px] top-0 w-[12px] h-[12px] bg-gradient-to-b from-[#f0f0f0] to-[#c8c8c8] border border-[#aaa]" />
                <svg width="3" height="5" viewBox="0 0 3 5"><path d="M0 0v5L3 2.5z" fill="#444" /></svg>
              </div>
              <div className="ml-[6px] w-[49px] h-[17px] bg-white border border-[#b0b0b0] flex items-center justify-between pl-[2px]">
                <span>0 %</span>
                <span className="w-[12px] h-full flex flex-col border-l border-[#ccc]">
                  <span className="flex-1 flex items-center justify-center bg-[#f0f0f0]"><Caret className="rotate-180" /></span>
                  <span className="flex-1 flex items-center justify-center bg-[#e8e8e8]"><Caret /></span>
                </span>
              </div>
            </div>
          </div>
          <div className="flex-1 flex flex-col items-center pl-[8px] pr-[7px]">
            <span className="w-[63px] h-[19px] rounded-[2px] border-2 border-[#7ab8d8] bg-gradient-to-b from-[#f8f8f8] to-[#d8d8d8] flex items-center justify-center">확인</span>
            <span className="mt-[6px] w-[63px] h-[19px] rounded-[2px] border border-[#8e8e8e] bg-gradient-to-b from-[#f8f8f8] to-[#d4d4d4] flex items-center justify-center">취소</span>
            <span className="mt-[160px] h-[12px]">새 색</span>
            <div className="mt-[2px] w-[59px] h-[59px] border border-[#8a7a50] flex flex-col">
              <span className="flex-1 bg-[#ff6a00]" />
              <span className="flex-1 bg-[#e6a800]" />
            </div>
            <span className="mt-[8px] h-[12px]">현재 색</span>
          </div>
        </div>
      </div>

      {/* Annotations */}
      <svg width="900" height="713" viewBox="0 0 900 713" className="absolute -left-[1px] -top-[1px] pointer-events-none">
        <path d="M472 405L667 452" stroke="#c5202a" strokeWidth="2" />
        <rect x="672" y="408" width="211" height="21" fill="none" stroke="#c5202a" strokeWidth="2.5" />
        <rect x="667" y="442" width="42" height="33" fill="none" stroke="#c5202a" strokeWidth="2.5" />
      </svg>
    </div>
  );
}
